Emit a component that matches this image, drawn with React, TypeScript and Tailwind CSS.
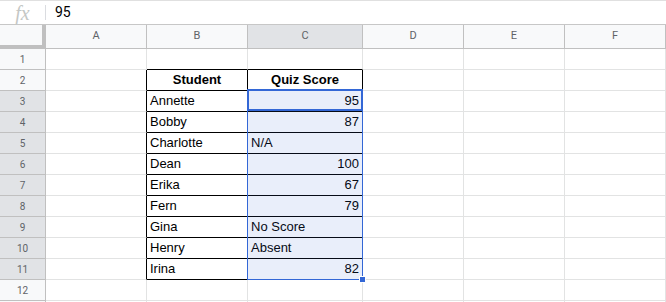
import React from "react";

type Cell = { text?: string; bold?: boolean; align?: "left" | "right" | "center" };

const COLS = ["A", "B", "C", "D", "E", "F"];

// row number -> [B, C]
const DATA: Record<number, [Cell, Cell]> = {
  2: [{ text: "Student", bold: true, align: "center" }, { text: "Quiz Score", bold: true, align: "center" }],
  3: [{ text: "Annette" }, { text: "95", align: "right" }],
  4: [{ text: "Bobby" }, { text: "87", align: "right" }],
  5: [{ text: "Charlotte" }, { text: "N/A" }],
  6: [{ text: "Dean" }, { text: "100", align: "right" }],
  7: [{ text: "Erika" }, { text: "67", align: "right" }],
  8: [{ text: "Fern" }, { text: "79", align: "right" }],
  9: [{ text: "Gina" }, { text: "No Score" }],
  10: [{ text: "Henry" }, { text: "Absent" }],
  11: [{ text: "Irina" }, { text: "82", align: "right" }],
};

const ROWS = [1, 2, 3, 4, 5, 6, 7, 8, 9, 10, 11, 12, 13];

function cellFor(row: number, col: number): Cell {
  const d = DATA[row];
  if (!d) return {};
  if (col === 1) return d[0];
  if (col === 2) return d[1];
  return {};
}

function GridCell({ row, col }: { row: number; col: number }) {
  const inTable = row >= 2 && row <= 11;
  const rightBlack = col <= 2 && inTable;
  const bottomBlack = (col === 1 || col === 2) && row >= 1 && row <= 11;
  const c = cellFor(row, col);
  const align =
    c.align === "right" ? "text-right" : c.align === "center" ? "text-center" : "text-left";
  return (
    <div
      className={`h-[21px] overflow-hidden whitespace-nowrap border-r border-b px-[3px] text-[13px] leading-[20px] text-black ${
        rightBlack ? "border-r-black" : "border-r-[#e2e3e3]"
      } ${bottomBlack ? "border-b-black" : "border-b-[#e2e3e3]"} ${align} ${c.bold ? "font-bold" : ""}`}
    >
      {c.text}
    </div>
  );
}

export default function App() {
  return (
    <div
      className="relative h-[302px] w-[666px] overflow-hidden bg-white"
      style={{ fontFamily: '"Liberation Sans", Arial, sans-serif' }}
    >
      {/* formula bar */}
      <div className="flex h-[25px] items-center border-t border-b border-t-[#e0e0e0] border-b-[#c7c7c7]">
        <div className="flex w-[45px] items-center justify-center">
          <span
            className="text-[20px] italic leading-none text-[#c4c7c5]"
            style={{ fontFamily: '"Liberation Serif", "Times New Roman", serif' }}
          >
            fx
          </span>
        </div>
        <div className="h-[15px] w-px bg-[#dadce0]" />
        <span className="pl-[9px] text-[14px] text-black" style={{ fontFamily: 'Roboto, "Liberation Sans", sans-serif' }}>
          95
        </span>
      </div>

      {/* sheet grid */}
      <div className="grid grid-cols-[46px_101px_101px_115px_101px_101px_101px]">
        <div className="h-[24px] border-r-4 border-b-4 border-[#c0c0c0] bg-[#f8f9fa]" />
        {COLS.map((l) => (
          <div
            key={l}
            className={`flex h-[24px] items-center justify-center border-r border-b border-[#c0c0c0] text-[11px] text-[#5f6368] ${
              l === "C" ? "bg-[#e1e3e6]" : "bg-[#f8f9fa]"
            }`}
            style={{ fontFamily: 'Roboto, "Liberation Sans", sans-serif' }}
          >
            {l}
          </div>
        ))}

        {ROWS.map((r) => (
          <React.Fragment key={r}>
            <div
              className={`flex h-[21px] items-center justify-center border-r border-b border-[#c0c0c0] text-[10px] text-[#5f6368] ${
                r >= 3 && r <= 11 ? "bg-[#e1e3e6]" : "bg-[#f8f9fa]"
              }`}
              style={{ fontFamily: 'Roboto, "Liberation Sans", sans-serif' }}
            >
              {r <= 12 ? r : ""}
            </div>
            {COLS.map((_, ci) => (
              <GridCell key={ci} row={r} col={ci} />
            ))}
          </React.Fragment>
        ))}
      </div>

      {/* selection C3:C11 */}
      <div className="pointer-events-none absolute top-[90px] left-[247px] h-[190px] w-[116px] border border-[#3367d6] bg-[#3367d6]/[0.11]" />
      {/* active cell C3 */}
      <div className="pointer-events-none absolute top-[89px] left-[247px] h-[22px] w-[116px] border-2 border-[#3367d6]" />
      {/* fill handle */}
      <div className="pointer-events-none absolute top-[276px] left-[359px] h-[7px] w-[7px] border border-white bg-[#3367d6]" />
    </div>
  );
}
